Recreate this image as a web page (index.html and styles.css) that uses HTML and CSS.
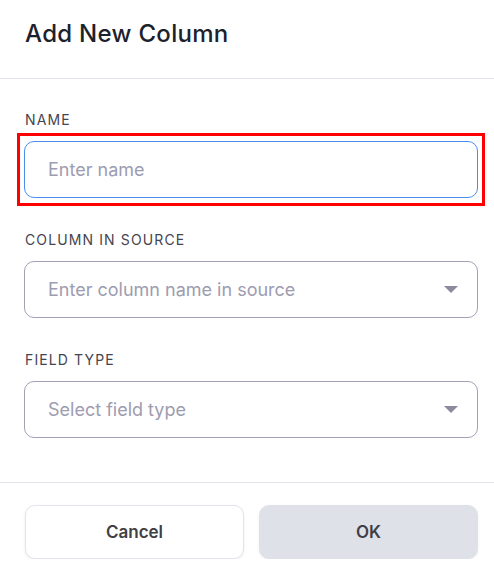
FILE: index.html
```html
<!DOCTYPE html>
<html lang="en">
<head>
<meta charset="utf-8">
<title>Add New Column</title>
<link rel="stylesheet" href="styles.css">
</head>
<body>
<div class="modal">
  <header class="modal-header">
    <h1 class="modal-title">Add New Column</h1>
  </header>
  <div class="modal-body">
    <div class="field">
      <label class="field-label" for="name">NAME</label>
      <div class="highlight-wrap">
        <input id="name" class="input input-focus" type="text" placeholder="Enter name">
        <span class="highlight"></span>
      </div>
    </div>
    <div class="field">
      <label class="field-label">COLUMN IN SOURCE</label>
      <div class="select">
        <span class="placeholder">Enter column name in source</span>
        <svg class="caret" width="14" height="7" viewBox="0 0 14 7"><path d="M0 0H14L7 7Z" fill="#8b8a9f"/></svg>
      </div>
    </div>
    <div class="field">
      <label class="field-label">FIELD TYPE</label>
      <div class="select">
        <span class="placeholder">Select field type</span>
        <svg class="caret" width="14" height="7" viewBox="0 0 14 7"><path d="M0 0H14L7 7Z" fill="#8b8a9f"/></svg>
      </div>
    </div>
  </div>
  <footer class="modal-footer">
    <button class="btn btn-cancel" type="button">Cancel</button>
    <button class="btn btn-ok" type="button">OK</button>
  </footer>
</div>
</body>
</html>
```

FILE: styles.css
```css
* { box-sizing: border-box; }
html, body { margin: 0; padding: 0; background: #fff; }
body {
  font-family: Inter, "Noto Sans", sans-serif;
  color: #1d222c;
}
.modal { width: 494px; }
.modal-header {
  height: 79px;
  padding: 21px 24px 0 25px;
  border-bottom: 1px solid #e3e3ea;
}
.modal-title {
  margin: 0;
  font-size: 24px;
  line-height: 26px;
  font-weight: 500;
  letter-spacing: 0.3px;
  color: #1c222c;
}
.modal-body {
  padding: 32px 16px 44px 24px;
  display: flex;
  flex-direction: column;
  gap: 33px;
}
.field {
  display: flex;
  flex-direction: column;
  gap: 13px;
}
.field-label {
  font-size: 14px;
  line-height: 17px;
  letter-spacing: 0.08em;
  color: #45454f;
  padding-left: 1px;
}
.highlight-wrap { position: relative; }
.highlight {
  position: absolute;
  left: -7px; right: -7px; top: -8px; bottom: -8px;
  border: 3px solid #ff0000;
  pointer-events: none;
}
.input, .select {
  width: 100%;
  height: 57px;
  border: 1px solid #a3a1b6;
  border-radius: 10px;
  padding: 0 19px 0 23px;
  font-family: inherit;
  font-size: 18px;
  color: #1d222c;
  background: #fff;
}
.input::placeholder { color: #9d9cb1; }
.input-focus { border-color: #4a8ff0; outline: none; }
.select {
  display: flex;
  align-items: center;
  justify-content: space-between;
}
.placeholder { color: #9d9cb1; }
.caret { display: block; flex: none; }
.modal-footer {
  border-top: 1px solid #e3e3ea;
  padding: 22px 16px 0 25px;
  display: flex;
  gap: 15px;
}
.btn {
  flex: 1;
  height: 54px;
  border-radius: 10px;
  font-family: inherit;
  font-size: 17px;
  font-weight: 600;
  color: #3f3f46;
}
.btn-cancel {
  background: #fff;
  border: 1px solid #e4e4eb;
  box-shadow: 0 1px 3px rgba(20, 20, 40, 0.08);
}
.btn-ok {
  background: #dfe1e8;
  border: 1px solid #dfe1e8;
  box-shadow: 0 1px 3px rgba(20, 20, 40, 0.06);
}
```
